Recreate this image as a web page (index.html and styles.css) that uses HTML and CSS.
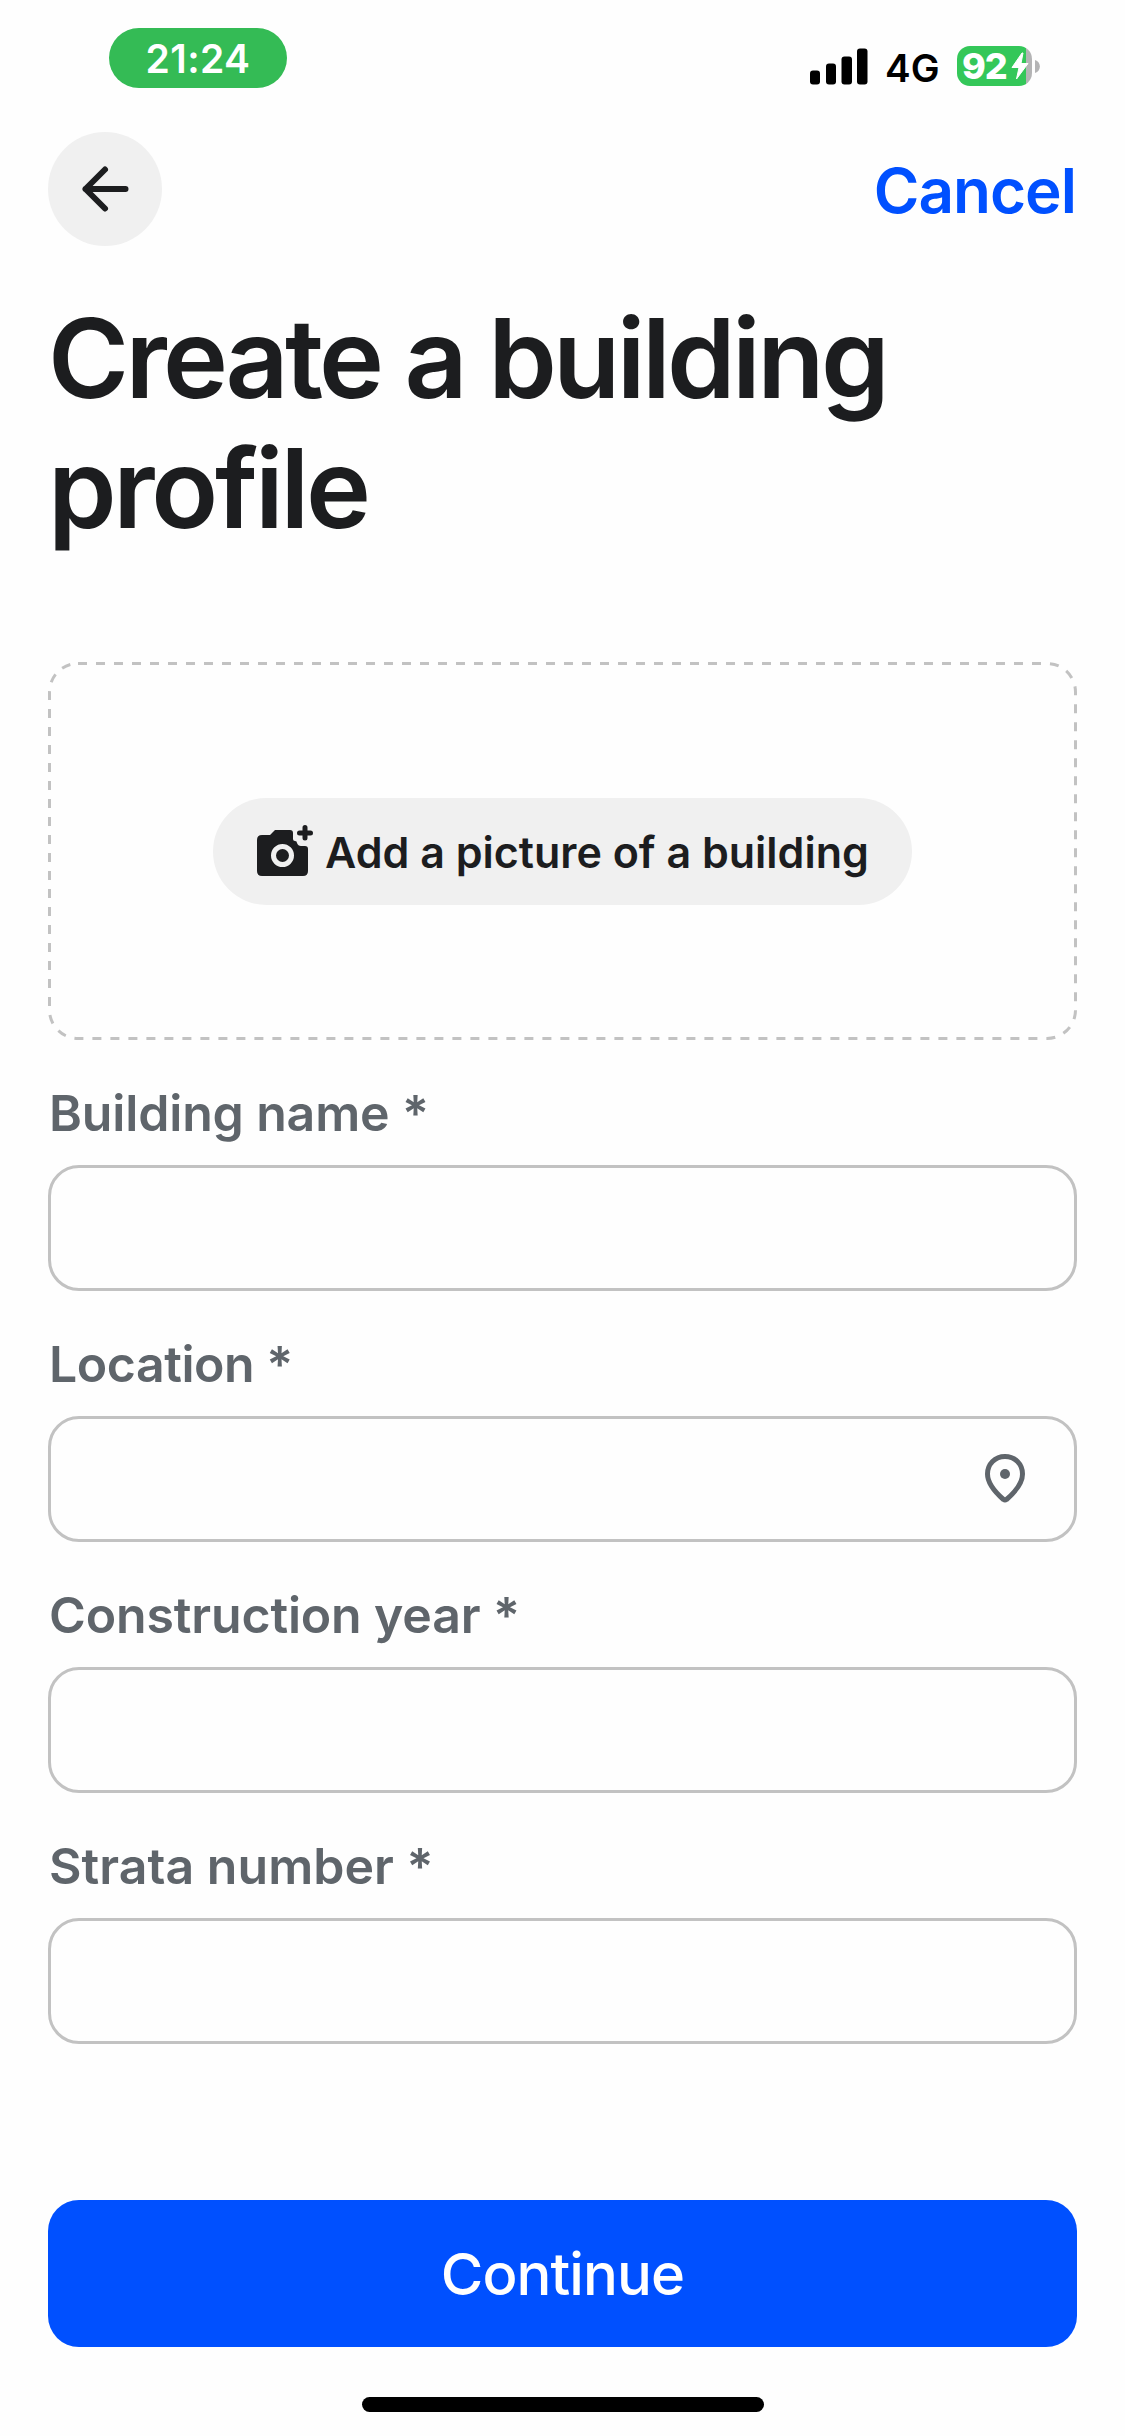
FILE: index.html
```html
<!DOCTYPE html>
<html lang="en">
<head>
<meta charset="utf-8">
<title>Create a building profile</title>
<link rel="stylesheet" href="styles.css">
</head>
<body>
<div class="screen">
  <div class="status">
    <div class="clock"><span class="clock-text">21:24</span></div>
    <div class="status-right">
      <svg class="signal" width="58" height="37" viewBox="0 0 58 37"><rect x="0" y="22.5" width="10" height="14" rx="3"/><rect x="16" y="15.5" width="10" height="21" rx="3"/><rect x="31.500" y="8.500" width="10.500" height="28" rx="3"/><rect x="47" y="0.500" width="10.500" height="36" rx="3"/></svg>
      <span class="network">4G</span>
      <div class="battery"><span class="level">92</span><svg class="bolt" width="18" height="28" viewBox="0 0 18 28"><path d="M11 1 1 15.500H8L5.500 27 17 11.500H10L12 1Z"/></svg></div>
      <svg class="battery-cap" width="5" height="13" viewBox="0 0 5 13"><path d="M0 0C6.500 2 6.500 11 0 13Z"/></svg>
    </div>
  </div>
  <header class="nav">
    <button class="back" aria-label="Back"><svg width="48" height="48" viewBox="0 0 48 48"><path d="M44.500 24H4.500M24 4.500 4.500 24 24 43.500"/></svg></button>
    <a class="cancel">Cancel</a>
  </header>
  <h1 class="title"><span class="title-first">Create a building</span><br><span class="title-second">profile</span></h1>
  <section class="upload">
    <svg class="upload-outline" width="1029" height="378"><rect x="1.500" y="1.500" width="1026" height="375" rx="28.500"/></svg>
    <button class="add"><svg class="camera" width="57" height="52" viewBox="0 0 57 52"><path class="solid" fill-rule="evenodd" d="M5 10H13L18 5H33Q36 5 36 8V14Q36 16 38 16Q40 16 40 18Q41 21 44 21H48Q51 21 51 24V46Q51 51 46 51H5Q0 51 0 46V15Q0 10 5 10ZM25.500 19A11.500 11.500 0 1 0 25.500 42A11.500 11.500 0 1 0 25.500 19Z"/><circle cx="25.500" cy="30.500" r="6.500"/><path class="plus" d="M48 2.500V13M42.500 8H53.500"/></svg><span class="add-text">Add a picture of a building</span></button>
  </section>
  <form class="form">
    <label class="field"><span class="label label-name">Building name *</span><span class="input"></span></label>
    <label class="field"><span class="label label-location">Location *</span><span class="input"><svg class="pin" width="40" height="50" viewBox="0 0 40 50"><path d="M20 2.500C10 2.500 2.500 10 2.500 20C2.500 29 10.500 38.500 18.500 45.500Q20 46.500 21.500 45.500C29.500 38.500 37.500 29 37.500 20C37.500 10 30 2.500 20 2.500Z"/><circle cx="20" cy="20" r="5"/></svg></span></label>
    <label class="field"><span class="label label-year">Construction year *</span><span class="input"></span></label>
    <label class="field"><span class="label label-strata">Strata number *</span><span class="input"></span></label>
  </form>
  <button class="continue"><span class="continue-text">Continue</span></button>
  <div class="home"></div>
</div>
</body>
</html>
```
FILE: styles.css
```css
* { box-sizing: border-box; }
body { margin: 0; background: #fefefe; color: #1c1d1f; font-family: Inter, "Liberation Sans", sans-serif; }
button { border: 0; padding: 0; font: inherit; color: inherit; }
svg { display: block; flex: none; }
span { white-space: nowrap; }
.screen { width: 1125px; height: 2436px; padding: 0 48px; display: flex; flex-direction: column; overflow: hidden; }
.status { height: 132px; flex: none; padding: 28px 37px 0 61px; display: flex; justify-content: space-between; align-items: flex-start; }
.clock { width: 178px; height: 60px; border-radius: 30px; background: #34bb55; color: #fff; display: flex; align-items: center; justify-content: center; font-size: 39px; font-weight: 600; letter-spacing: 0.4px; line-height: 60px; padding-top: 1px; }
.status-right { display: flex; align-items: center; height: 40px; margin-top: 18px; color: #000; }
.signal { margin-right: 17px; }
.network { font-size: 38.5px; font-weight: 600; line-height: 40px; width: 72px; padding-top: 4px; }
.battery { width: 75px; height: 40px; border-radius: 13px; background: linear-gradient(to right, #34c759 69px, #b4b4b5 69px); color: #fff; display: flex; align-items: center; padding-left: 5px; }
.level { font-size: 36px; font-weight: 800; line-height: 40px; letter-spacing: -1px; width: 49px; }
.bolt path { fill: #fff; stroke: #fff; stroke-width: 1; }
.battery-cap { margin-left: 3px; fill: #b4b4b5; }
.nav { height: 114px; flex: none; display: flex; justify-content: space-between; align-items: center; }
.back { width: 114px; height: 114px; border-radius: 50%; background: #f0f0f0; display: flex; align-items: center; justify-content: center; }
.back path { fill: none; stroke: #1c1d1f; stroke-width: 6; stroke-linecap: round; stroke-linejoin: round; }
.cancel { color: #0050ff; font-size: 62px; font-weight: 600; line-height: 80px; padding: 4px 1px 0 0; letter-spacing: -1px; }
.title { margin: 46px 0 0; height: 370px; flex: none; font-size: 110px; font-weight: 600; line-height: 130px; padding-top: 1px; }
.title-first { letter-spacing: -3.65px; }
.title-second { letter-spacing: -3.3px; }
.upload { position: relative; height: 378px; flex: none; display: flex; align-items: center; justify-content: center; }
.upload-outline { position: absolute; inset: 0; fill: none; stroke: #c2c2c2; stroke-width: 3; stroke-dasharray: 9 9; }
.add { width: 699px; height: 107px; border-radius: 54px; background: #f0f0f0; display: flex; align-items: center; padding-left: 44px; gap: 11px; font-size: 43px; font-weight: 600; }
.add-text { padding-top: 2px; }
.camera { fill: #1c1d1f; }
.plus { stroke: #1c1d1f; stroke-width: 5; stroke-linecap: round; }
.form { margin-top: 43px; display: flex; flex-direction: column; gap: 43px; }
.field { display: flex; flex-direction: column; height: 208px; }
.label { height: 82px; padding-left: 1px; line-height: 61px; font-size: 50px; font-weight: 600; color: #5f656b; }
.label-name { letter-spacing: -0.15px; }
.label-location { letter-spacing: -0.45px; }
.label-year { letter-spacing: -0.15px; }
.label-strata { letter-spacing: 0.05px; }
.input { height: 126px; border: 3px solid #c2c2c2; border-radius: 31px; display: flex; align-items: center; justify-content: flex-end; padding-right: 49px; }
.pin path { fill: none; stroke: #5f656b; stroke-width: 5; }
.pin circle { fill: #5f656b; }
.continue { margin-top: 156px; height: 147px; flex: none; border-radius: 31px; background: #0050ff; color: #fff; font-size: 58px; font-weight: 500; letter-spacing: -0.9px; }
.home { width: 402px; height: 15px; flex: none; border-radius: 8px; background: #000; margin: 50px auto 0; }
```
